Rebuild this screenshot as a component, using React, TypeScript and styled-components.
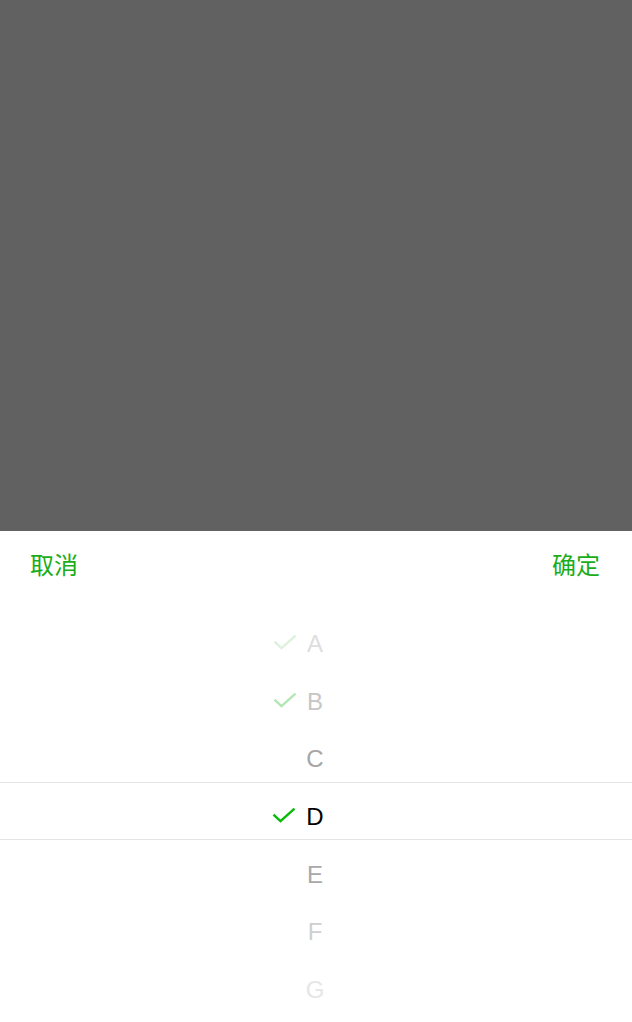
import React from "react";
import styled, { createGlobalStyle } from "styled-components";

const Global = createGlobalStyle`
  html, body { margin: 0; padding: 0; background: #616161; }
  body { font-family: "Liberation Sans", "Noto Sans CJK SC", sans-serif; }
`;

const Page = styled.div`
  width: 632px;
  height: 1022px;
  display: flex;
  flex-direction: column;
  background: #616161;
  overflow: hidden;
`;

const Overlay = styled.div`
  flex: 0 0 531px;
`;

const Sheet = styled.div`
  flex: 1;
  background: #fff;
  display: flex;
  flex-direction: column;
`;

const Header = styled.div`
  height: 66px;
  padding: 0 32px 2px 30px;
  display: flex;
  align-items: center;
  justify-content: space-between;
`;

const Action = styled.span`
  color: #1aad19;
  font-family: "Noto Sans CJK SC", sans-serif;
  font-size: 24px;
  line-height: 1;
`;

const Picker = styled.div`
  position: relative;
  padding-top: 16px;
`;

const Indicator = styled.div`
  position: absolute;
  left: 0;
  right: 0;
  top: 183px;
  height: 56px;
  border-top: 1px solid #e5e5e5;
  border-bottom: 1px solid #e5e5e5;
  pointer-events: none;
`;

const Item = styled.div<{ $color: string }>`
  height: 57.7px;
  display: flex;
  align-items: center;
  justify-content: center;
  font-size: 24px;
  color: ${(p) => p.$color};
`;

const Label = styled.span`
  position: relative;
  display: inline-block;
  line-height: 1;
  margin-left: -2px;
`;

const Check = styled.svg`
  position: absolute;
  left: -34px;
  top: 50%;
  width: 24px;
  height: 16px;
  transform: translateY(-62%);
`;

const items = [
  { l: "A", c: "#dedede", k: "#dcf2dc" },
  { l: "B", c: "#c6c6c6", k: "#b4e6b4" },
  { l: "C", c: "#a6a6a6", k: null },
  { l: "D", c: "#000000", k: "#09bb07" },
  { l: "E", c: "#a9a9a9", k: null },
  { l: "F", c: "#cfcfcf", k: null },
  { l: "G", c: "#e6e6e6", k: null },
];

export default function App() {
  return (
    <Page>
      <Global />
      <Overlay />
      <Sheet>
        <Header>
          <Action>取消</Action>
          <Action>确定</Action>
        </Header>
        <Picker>
          <Indicator />
          {items.map((it) => (
            <Item key={it.l} $color={it.c}>
              <Label>
                {it.k && (
                  <Check viewBox="0 0 24 16">
                    <path
                      d="M1.5 7.5 L8.5 14 L22.5 1.5"
                      fill="none"
                      stroke={it.k}
                      strokeWidth="2.4"
                      strokeLinecap="butt"
                      strokeLinejoin="miter"
                    />
                  </Check>
                )}
                {it.l}
              </Label>
            </Item>
          ))}
        </Picker>
      </Sheet>
    </Page>
  );
}
